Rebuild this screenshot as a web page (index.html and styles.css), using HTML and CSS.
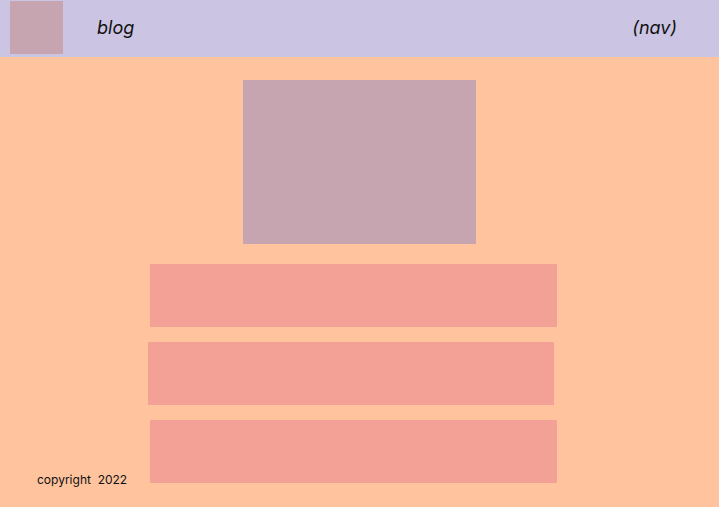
FILE: index.html
```html
<!DOCTYPE html>
<html lang="en">
<head>
    <meta charset="UTF-8">
    <meta name="viewport" content="width=device-width, initial-scale=1.0">
    <title>blog</title>
    <link rel="stylesheet" href="styles.css">
</head>
<body>
    <header class="site-header">
        <div class="logo"></div>
        <span class="brand">blog</span>
        <span class="nav">(nav)</span>
    </header>

    <main class="content">
        <div class="hero"></div>
        <div class="post"></div>
        <div class="post post-shifted"></div>
        <div class="last-row">
            <footer class="site-footer">copyright&nbsp; 2022</footer>
            <div class="post"></div>
        </div>
    </main>
</body>
</html>
```

FILE: styles.css
```css
* {
    margin: 0;
    padding: 0;
    box-sizing: border-box;
}

html, body {
    height: 100%;
}

body {
    font-family: Inter, "Noto Sans", sans-serif;
    background-color: #ffc39e;
    color: #111;
    overflow: hidden;
}

.site-header {
    display: flex;
    align-items: center;
    height: 57px;
    padding: 0 42px 3px 10px;
    background-color: #cbc5e3;
}

.logo {
    width: 53px;
    height: 53px;
    margin-top: 1px;
    background-color: #c7a5b0;
    align-self: flex-start;
}

.brand,
.nav {
    font-size: 18px;
    font-style: italic;
}

.brand {
    margin-left: 34px;
}

.nav {
    margin-left: auto;
}

.content {
    display: flex;
    flex-direction: column;
    padding-top: 23px;
}

.hero {
    align-self: center;
    width: 233px;
    height: 164px;
    margin-bottom: 20px;
    background-color: #c6a5b0;
}

.post {
    width: 407px;
    height: 63px;
    margin-left: 150px;
    margin-bottom: 15px;
    background-color: #f3a096;
}

.post-shifted {
    margin-left: 148px;
    width: 406px;
}

.last-row {
    display: flex;
    align-items: flex-end;
}

.last-row .post {
    margin-left: 0;
}

.site-footer {
    width: 150px;
    padding-left: 37px;
    font-size: 12px;
    line-height: 15px;
    margin-bottom: 11px;
}
```
